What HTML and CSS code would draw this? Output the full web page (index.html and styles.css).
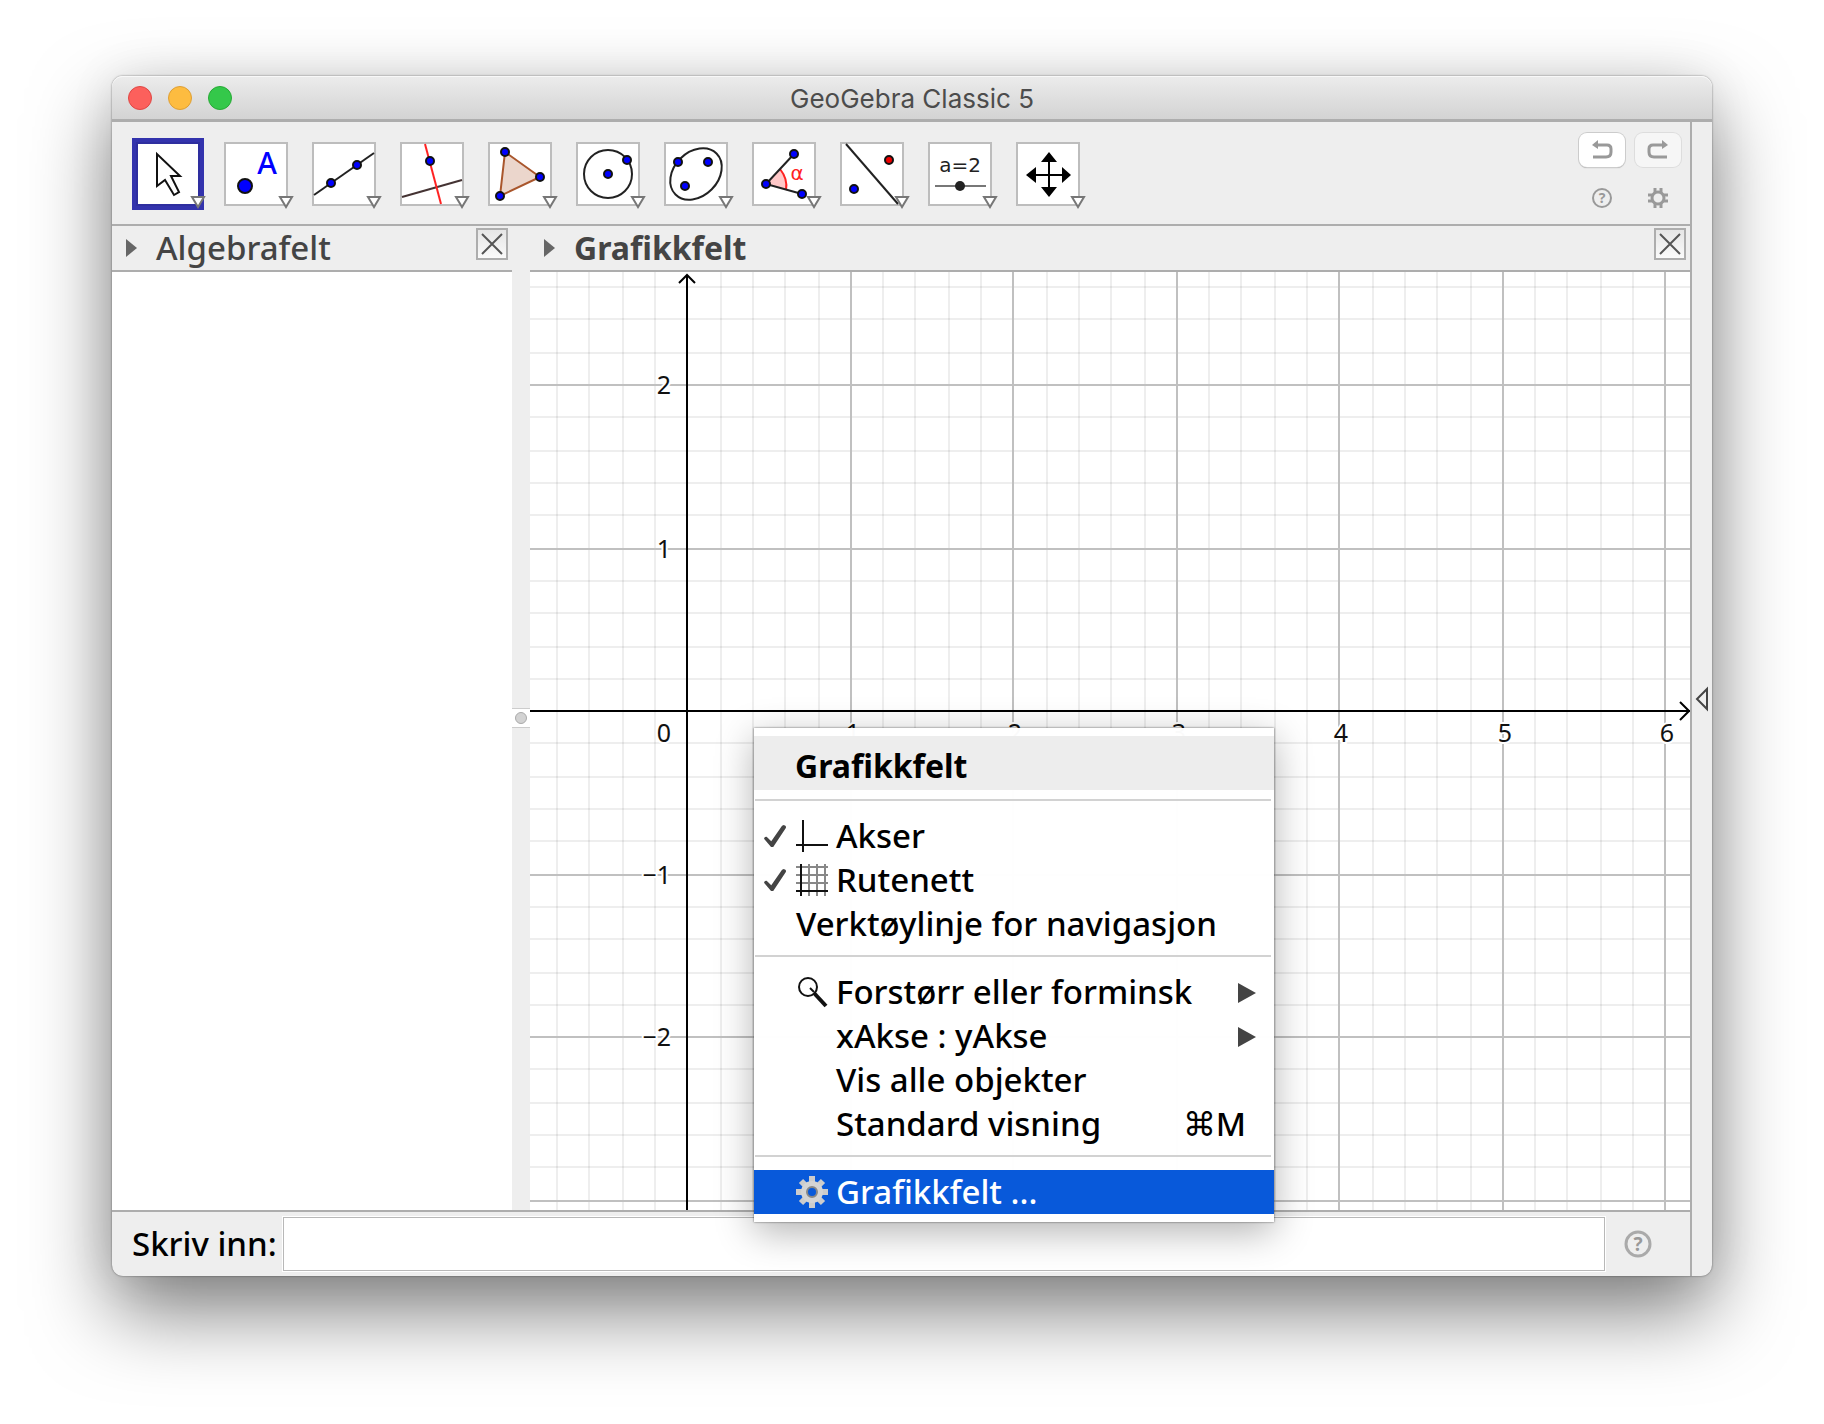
FILE: index.html
```html
<!DOCTYPE html>
<html lang="nb">
<head>
<meta charset="utf-8">
<title>GeoGebra Classic 5</title>
<link rel="stylesheet" href="styles.css">
</head>
<body>
<main class="window">
  <header class="titlebar">
    <div class="lights">
      <button class="light light-close" aria-label="Lukk"></button>
      <button class="light light-min" aria-label="Minimer"></button>
      <button class="light light-max" aria-label="Maksimer"></button>
    </div>
    <h1 class="title">GeoGebra Classic 5</h1>
  </header>

  <div class="body">
    <div class="workspace">
      <div class="toolbar">
        <div class="tools">
          <button class="tool tool-active" aria-label="Flytt"><svg viewBox="2 2 60 60"><path d="M21 12V44L29 38L38 53L43 50L35 34H44Z" fill="#fff" stroke="#111" stroke-width="2"/><path class="drop" d="M56 55H68L62 65Z"/></svg></button>
          <button class="tool" aria-label="Punkt"><svg viewBox="2 2 60 60"><circle cx="21" cy="44" r="7" class="pt"/><text x="43" y="32" class="letter-a">A</text><path class="drop" d="M56 55H68L62 65Z"/></svg></button>
          <button class="tool" aria-label="Linje"><svg viewBox="2 2 60 60"><path class="ln" d="M2 53L62 11"/><circle cx="19" cy="41" r="4" class="pt"/><circle cx="45" cy="23" r="4" class="pt"/><path class="drop" d="M56 55H68L62 65Z"/></svg></button>
          <button class="tool" aria-label="Normal"><svg viewBox="2 2 60 60"><path d="M2 55L62 38" stroke="#433" stroke-width="2"/><path d="M25 2L41 62" stroke="#f22" stroke-width="2"/><circle cx="30" cy="19" r="4" class="pt"/><path class="drop" d="M56 55H68L62 65Z"/></svg></button>
          <button class="tool" aria-label="Mangekant"><svg viewBox="2 2 60 60"><path d="M17 10L52 35L12 54Z" fill="#ebd6cc" stroke="#a9562c" stroke-width="2"/><circle cx="17" cy="10" r="4" class="pt"/><circle cx="52" cy="35" r="4" class="pt"/><circle cx="12" cy="54" r="4" class="pt"/><path class="drop" d="M56 55H68L62 65Z"/></svg></button>
          <button class="tool" aria-label="Sirkel"><svg viewBox="2 2 60 60"><circle cx="32" cy="32" r="24" class="ln"/><circle cx="32" cy="32" r="4" class="pt"/><circle cx="51" cy="18" r="4" class="pt"/><path class="drop" d="M56 55H68L62 65Z"/></svg></button>
          <button class="tool" aria-label="Ellipse"><svg viewBox="2 2 60 60"><ellipse cx="32" cy="32" rx="29" ry="22" transform="rotate(-45 32 32)" class="ln"/><circle cx="14" cy="20" r="4" class="pt"/><circle cx="44" cy="20" r="4" class="pt"/><circle cx="21" cy="44" r="4" class="pt"/><path class="drop" d="M56 55H68L62 65Z"/></svg></button>
          <button class="tool" aria-label="Vinkel"><svg viewBox="2 2 60 60"><path d="M14 42L28 27Q36 37 34 48Z" fill="#ffc8c8"/><path d="M28 27Q36 37 34 48" fill="none" stroke="#f22" stroke-width="2"/><path class="ln" d="M42 12L14 42L50 52"/><circle cx="14" cy="42" r="4" class="pt"/><circle cx="42" cy="12" r="4" class="pt"/><circle cx="50" cy="52" r="4" class="pt"/><text x="45" y="38" class="alpha">α</text><path class="drop" d="M56 55H68L62 65Z"/></svg></button>
          <button class="tool" aria-label="Speiling"><svg viewBox="2 2 60 60"><path class="ln" d="M6 2L58 62"/><circle cx="49" cy="18" r="4" class="pt pt-red"/><circle cx="14" cy="47" r="4" class="pt"/><path class="drop" d="M56 55H68L62 65Z"/></svg></button>
          <button class="tool" aria-label="Glider"><svg viewBox="2 2 60 60"><text x="32" y="30" class="slider-text">a=2</text><path d="M7 44H58" stroke="#777" stroke-width="2"/><circle cx="32" cy="44" r="5" fill="#222"/><path class="drop" d="M56 55H68L62 65Z"/></svg></button>
          <button class="tool" aria-label="Flytt grafikkfeltet"><svg viewBox="2 2 60 60"><path d="M33 16V48M16 33H50" stroke="#000" stroke-width="2"/><path d="M33 10L41 20H25ZM33 55L25 45H41ZM10 33L20 25V41ZM55 33L46 25V41Z"/><path class="drop" d="M56 55H68L62 65Z"/></svg></button>
        </div>
        <div class="actions">
          <button class="history" aria-label="Angre"><svg width="24" height="20" viewBox="0 0 24 20"><path d="M7 5H17Q21 5 21 9V12Q21 17 16 17H3" fill="none" stroke="#999" stroke-width="3"/><path d="M2 5L8 0V9Z" fill="#999"/></svg></button>
          <button class="history history-off" aria-label="Gjør om"><svg width="24" height="20" viewBox="0 0 24 20"><path d="M17 5H7Q3 5 3 9V12Q3 17 8 17H21" fill="none" stroke="#999" stroke-width="3"/><path d="M22 5L16 0V9Z" fill="#999"/></svg></button>
          <button class="mini" aria-label="Hjelp"><svg width="20" height="20" viewBox="0 0 20 20"><circle cx="10" cy="10" r="9" fill="none" stroke="#999" stroke-width="2"/><text x="10" y="15" class="q-small">?</text></svg></button>
          <button class="mini" aria-label="Innstillinger"><svg width="20" height="20" viewBox="0 0 20 20"><circle cx="10" cy="10" r="6" fill="none" stroke="#999" stroke-width="3"/><path d="M7 0V5M13 0V5M7 15V20M13 15V20M0 7H5M0 13H5M15 7H20M15 13H20" stroke="#999" stroke-width="3"/></svg></button>
        </div>
      </div>

      <div class="panels">
        <section class="panel algebra">
          <div class="panel-head">
            <svg class="twist" width="12" height="20" viewBox="0 0 12 20"><path d="M0 1L11 10L0 19Z" fill="#666"/></svg>
            <h2 class="panel-title">Algebrafelt</h2>
            <button class="close" aria-label="Lukk algebrafelt"><svg width="28" height="28" viewBox="0 0 28 28"><path d="M4 4L24 24M24 4L4 24" stroke="#555" stroke-width="2"/></svg></button>
          </div>
          <div class="panel-body"></div>
        </section>
        <div class="divider"><span class="grip"><span class="grip-dot"></span></span></div>
        <section class="panel graphics">
          <div class="panel-head">
            <svg class="twist" width="12" height="20" viewBox="0 0 12 20"><path d="M0 1L11 10L0 19Z" fill="#666"/></svg>
            <h2 class="panel-title panel-title-on">Grafikkfelt</h2>
            <button class="close" aria-label="Lukk grafikkfelt"><svg width="28" height="28" viewBox="0 0 28 28"><path d="M4 4L24 24M24 4L4 24" stroke="#555" stroke-width="2"/></svg></button>
          </div>
          <div class="panel-body plot-area">
            <svg class="plot" role="img" aria-label="Koordinatsystem">
              <path class="minor" d="M27 0V2000M59 0V2000M93 0V2000M125 0V2000M191 0V2000M223 0V2000M255 0V2000M289 0V2000M353 0V2000M385 0V2000M419 0V2000M451 0V2000M517 0V2000M549 0V2000M581 0V2000M615 0V2000M679 0V2000M711 0V2000M745 0V2000M777 0V2000M843 0V2000M875 0V2000M907 0V2000M941 0V2000M1005 0V2000M1037 0V2000M1071 0V2000M1103 0V2000"/>
              <path class="minor" d="M0 15H3000M0 47H3000M0 81H3000M0 145H3000M0 179H3000M0 211H3000M0 243H3000M0 309H3000M0 341H3000M0 375H3000M0 407H3000M0 471H3000M0 505H3000M0 537H3000M0 569H3000M0 635H3000M0 667H3000M0 701H3000M0 733H3000M0 797H3000M0 831H3000M0 863H3000M0 895H3000"/>
              <path class="major" d="M321 0V2000M483 0V2000M647 0V2000M809 0V2000M973 0V2000M1135 0V2000M0 113H3000M0 277H3000M0 603H3000M0 765H3000M0 929H3000"/>
              <path class="axis" d="M157 4V2000M149 11L157 3L165 11"/>
              <path class="axis" d="M0 439H3000"/>
              <svg x="100%" y="439" overflow="visible"><path class="axis" d="M-10 -9L-1 0L-10 9"/></svg>
              <g class="num num-y"><text x="141" y="122">2</text><text x="141" y="286">1</text><text x="141" y="470">0</text><text x="141" y="612">−1</text><text x="141" y="774">−2</text></g>
              <g class="num num-x"><text x="323" y="470">1</text><text x="485" y="470">2</text><text x="649" y="470">3</text><text x="811" y="470">4</text><text x="975" y="470">5</text><text x="1137" y="470">6</text></g>
            </svg>

            <div class="menu" role="menu">
              <div class="menu-head">Grafikkfelt</div>
              <hr class="sep">
              <label class="item"><input class="check" type="checkbox" checked><svg class="icon" viewBox="0 0 32 32"><path d="M7 0V32M0 25H32" stroke="#111" stroke-width="2"/></svg><span>Akser</span></label>
              <label class="item"><input class="check" type="checkbox" checked><svg class="icon" viewBox="0 0 32 32"><path d="M13 0V32M21 0V32M29 0V32M0 3H32M0 11H32M0 19H32" stroke="#888" stroke-width="2"/><path d="M5 0V32M0 27H32" stroke="#111" stroke-width="2"/></svg><span>Rutenett</span></label>
              <label class="item"><input class="check" type="checkbox"><span>Verktøylinje for navigasjon</span></label>
              <hr class="sep">
              <button class="item item-cmd"><svg class="icon" viewBox="0 0 32 32"><circle cx="12" cy="11" r="9" fill="#fff" stroke="#111" stroke-width="2"/><path d="M14 12L18 16" stroke="#111" stroke-width="2"/><path d="M18 17L30 30" stroke="#111" stroke-width="4"/></svg><span>Forstørr eller forminsk</span><svg class="sub" viewBox="0 0 18 20"><path d="M0 0L18 10L0 20Z" fill="#444"/></svg></button>
              <button class="item item-cmd"><span class="icon"></span><span>xAkse : yAkse</span><svg class="sub" viewBox="0 0 18 20"><path d="M0 0L18 10L0 20Z" fill="#444"/></svg></button>
              <button class="item item-cmd"><span class="icon"></span><span>Vis alle objekter</span></button>
              <button class="item item-cmd"><span class="icon"></span><span>Standard visning</span><kbd class="key">⌘M</kbd></button>
              <hr class="sep">
              <button class="item item-cmd item-on"><svg class="icon" viewBox="0 0 32 32"><g stroke="#ccc" stroke-width="6"><path d="M16 0V32M0 16H32M5 5L27 27M27 5L5 27"/></g><circle cx="16" cy="16" r="8" fill="#0859da" stroke="#d4d4d4" stroke-width="6"/><circle cx="16" cy="16" r="5" fill="#0859da" stroke="#888" stroke-width="2"/></svg><span>Grafikkfelt ...</span></button>
            </div>
          </div>
        </section>
      </div>

      <form class="inputbar">
        <label class="input-label" for="cmd">Skriv inn:</label>
        <input class="input" id="cmd" type="text">
        <button class="mini" type="button" aria-label="Inndatahjelp"><svg width="28" height="28" viewBox="0 0 28 28"><circle cx="14" cy="14" r="12" fill="none" stroke="#aaa" stroke-width="3"/><text x="14" y="21" class="q-large">?</text></svg></button>
      </form>
    </div>
    <button class="strip" aria-label="Vis sidefelt"><svg width="12" height="22" viewBox="0 0 12 22"><path d="M11 1V21L1 11Z" fill="none" stroke="#444" stroke-width="2"/></svg></button>
  </div>
</main>
</body>
</html>
```
FILE: styles.css
```css
* { box-sizing: border-box; }

body {
  margin: 0;
  min-height: 100vh;
  padding: 76px 112px 148px;
  display: flex;
  background: #fff;
  color: #000;
  font: 500 33px/44px "Noto Sans", sans-serif;
}

button {
  margin: 0;
  padding: 0;
  border: 0;
  background: none;
  color: inherit;
  font: inherit;
}

svg { display: block; overflow: visible; }

.window {
  flex: 1;
  min-width: 0;
  display: flex;
  flex-direction: column;
  border-radius: 11px;
  background: #eee;
  box-shadow: 0 0 2px rgba(0, 0, 0, .55), 0 36px 80px rgba(0, 0, 0, .5), 0 0 48px rgba(0, 0, 0, .08);
}

.titlebar {
  display: grid;
  grid-template-columns: 1fr auto 1fr;
  align-items: center;
  height: 46px;
  padding: 0 16px;
  border-bottom: 3px solid #adadad;
  border-radius: 11px 11px 0 0;
  background: linear-gradient(#ececec, #d3d3d3);
  box-shadow: inset 0 1px #f8f8f8;
}

.lights { display: flex; gap: 16px; }
.light { width: 24px; height: 24px; border: 1px solid; border-radius: 50%; }
.light-close { background: #fc605c; border-color: #df4744; }
.light-min { background: #fdbc40; border-color: #de9f34; }
.light-max { background: #34c84a; border-color: #27aa35; }

.title {
  margin: 0;
  padding-top: 2px;
  color: #4c4c4c;
  font: 400 26px/40px Inter, sans-serif;
}

.body { flex: 1; display: flex; }
.workspace { flex: 1; min-width: 0; display: flex; flex-direction: column; }

.strip {
  width: 22px;
  padding-left: 4px;
  border-left: 2px solid #adadad;
}

.toolbar {
  display: flex;
  justify-content: space-between;
  height: 104px;
  padding: 0 9px 0 24px;
  border-bottom: 2px solid #adadad;
}

.tools { display: flex; gap: 24px; padding-top: 20px; }
.tool { width: 64px; height: 64px; border: 2px solid #bdbdbd; background: #fff; }
.tool svg { width: 60px; height: 60px; }
.tool-active { border-color: #2e2e9f; box-shadow: 0 0 0 4px #3333ad; }

.drop { fill: #fff; stroke: #777; stroke-width: 2; }
.ln { fill: none; stroke: #222; stroke-width: 2; }
.pt { fill: #00f; stroke: #111; stroke-width: 2; }
.pt-red { fill: #e00; }
.letter-a { fill: #00f; font: 500 30px "Noto Sans", sans-serif; text-anchor: middle; }
.alpha { fill: #f22; font: 20px "DejaVu Sans", sans-serif; text-anchor: middle; }
.slider-text { fill: #222; font: 20px "DejaVu Sans", sans-serif; text-anchor: middle; }

.actions {
  display: grid;
  grid-template-columns: 46px 46px;
  grid-template-rows: 34px 20px;
  gap: 21px 10px;
  padding-top: 11px;
}

.history {
  display: grid;
  place-items: center;
  border-radius: 8px;
  background: #fff;
  box-shadow: 0 0 0 1px #ccc, 0 1px 1px #999;
}
.history-off { background: #f6f6f6; box-shadow: 0 0 0 1px #ddd; }
.mini { display: grid; place-items: center; }
.q-small { fill: #999; font: bold 14px "Noto Sans", sans-serif; text-anchor: middle; }
.q-large { fill: #999; font: bold 19px "Noto Sans", sans-serif; text-anchor: middle; }

.panels { flex: 1; display: flex; }
.panel { display: flex; flex-direction: column; }
.algebra { width: 400px; }
.graphics { flex: 1; min-width: 0; }

.panel-head {
  display: flex;
  align-items: center;
  height: 46px;
  padding: 0 4px 0 14px;
  border-bottom: 2px solid #adadad;
  color: #444;
}
.twist { margin-right: 18px; }
.panel-title { flex: 1; margin: 0; font-size: 33px; font-weight: 500; }
.panel-title-on { font-size: 32px; font-weight: 700; }
.close {
  align-self: flex-start;
  width: 32px;
  height: 32px;
  margin-top: 2px;
  border: 2px solid #adadad;
  background: linear-gradient(#e6e6e6, #fafafa);
}
.panel-body { flex: 1; background: #fff; }

.divider {
  display: flex;
  align-items: center;
  width: 18px;
}
.grip {
  display: grid;
  place-items: center;
  width: 18px;
  height: 20px;
  border: solid #ccc;
  border-width: 1px 0;
  background: #fff;
}
.grip-dot { width: 12px; height: 12px; border: 1px solid #aaa; border-radius: 50%; background: #d2d2d2; }

.plot-area { position: relative; }
.plot { position: absolute; inset: 0; width: 100%; height: 100%; overflow: hidden; }
.minor { stroke: rgba(0, 0, 0, .065); stroke-width: 2; }
.major { stroke: #c0c0c0; stroke-width: 2; }
.axis { fill: none; stroke: #000; stroke-width: 2; }
.num { fill: #111; stroke: #fff; stroke-width: 4; paint-order: stroke; font: 25px "Noto Sans", sans-serif; }
.num-y { text-anchor: end; }
.num-x { text-anchor: middle; }

.menu {
  position: absolute;
  left: 224px;
  top: 456px;
  width: 520px;
  padding: 8px 0;
  background: rgba(255, 255, 255, .98);
  box-shadow: 0 0 2px rgba(0, 0, 0, .6), 0 10px 36px rgba(0, 0, 0, .3);
}
.menu-head {
  height: 54px;
  padding: 8px 41px 0;
  background: #ededed;
  font-size: 32px;
  font-weight: 700;
}
.sep { height: 2px; margin: 9px 3px 13px 1px; border: 0; background: #d2d2d2; }
.item {
  display: flex;
  align-items: center;
  width: 100%;
  height: 44px;
  padding-left: 10px;
  white-space: nowrap;
  text-align: left;
}
.item-cmd { padding-left: 42px; }
.item-on { background: #0859da; color: #fff; }
.icon { width: 32px; height: 32px; margin-right: 8px; }
.check { appearance: none; width: 22px; height: 22px; margin: 0 10px 0 0; }
.check:checked {
  background: #444;
  clip-path: polygon(0 62%, 4% 54%, 12% 53%, 33% 74%, 82% 3%, 90% 0, 99% 4%, 100% 12%, 42% 100%, 32% 100%);
}
.sub { width: 18px; height: 20px; margin: 2px 18px 0 auto; }
.key { margin: 0 28px 0 auto; font: inherit; }

.inputbar {
  display: flex;
  align-items: center;
  height: 66px;
  padding: 0 38px 0 20px;
  border-top: 2px solid #adadad;
}
.input-label { width: 151px; }
.input {
  flex: 1;
  height: 54px;
  margin-right: 19px;
  padding: 0 8px;
  border: 1px solid #b8b8b8;
  outline: 1px solid #fff;
  background: #fff;
  font: inherit;
}
```
